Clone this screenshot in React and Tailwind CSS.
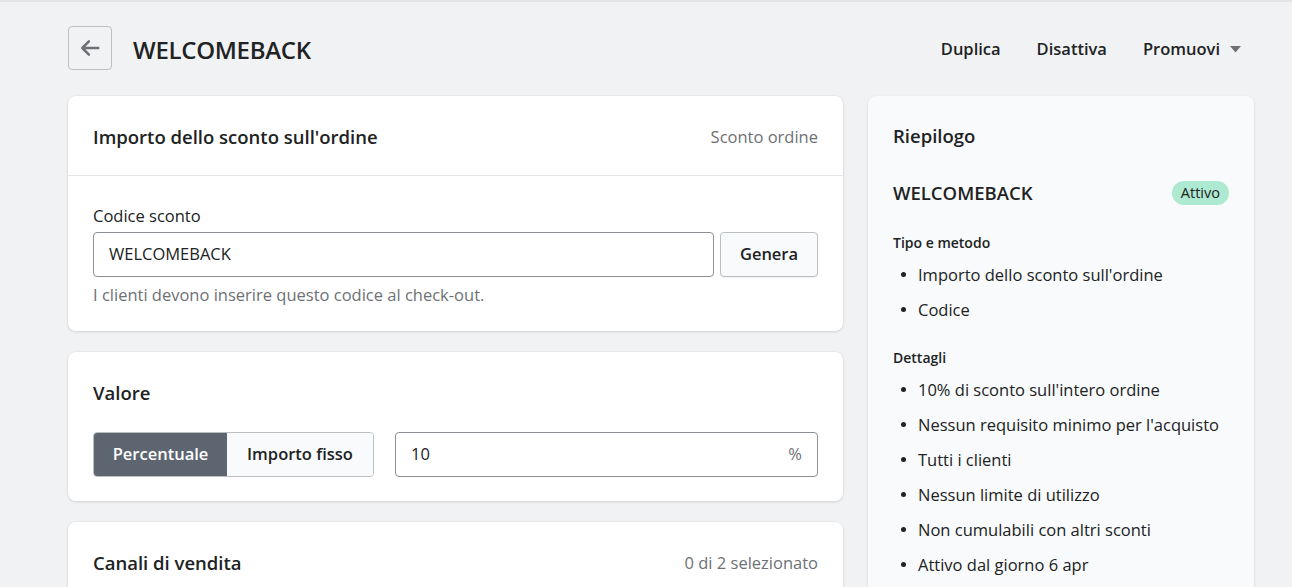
import React from 'react'

const font = { fontFamily: '"Open Sans", "Noto Sans", sans-serif' }

const Card = ({ children, className = '' }) => (
    <div className={`bg-white rounded-lg shadow-[0_1px_3px_rgba(0,0,0,0.12),0_0_0_1px_rgba(0,0,0,0.02)] ${className}`}>
        {children}
    </div>
)

const summaryType = ["Importo dello sconto sull'ordine", 'Codice']
const summaryDetails = [
    "10% di sconto sull'intero ordine",
    "Nessun requisito minimo per l'acquisto",
    'Tutti i clienti',
    'Nessun limite di utilizzo',
    'Non cumulabili con altri sconti',
    'Attivo dal giorno 6 apr',
]

const Bullets = ({ items }) => (
    <ul className="flex flex-col gap-[11px] mt-[10px]">
        {items.map((t) => (
            <li key={t} className="flex items-center text-[16.5px] leading-6 text-[#202223]">
                <span className="w-[5px] h-[5px] rounded-full bg-[#202223] ml-[8px] mr-[12px] shrink-0" />
                {t}
            </li>
        ))}
    </ul>
)

export default function App() {
    return (
        <div style={font} className="w-[1292px] h-[587px] overflow-hidden bg-[#f1f2f4] border-t-2 border-[#e3e4e6] text-[#202223]">
            <div className="w-[1186px] ml-[68px]">
                {/* header */}
                <div className="flex items-center justify-between mt-[24px] h-[44px]">
                    <div className="flex items-center gap-[21px]">
                        <button className="w-[44px] h-[44px] rounded-[4px] border border-[#babfc3] flex items-center justify-center text-[#6d7175]">
                            <svg width="22" height="22" viewBox="0 0 20 20" fill="none" stroke="currentColor" strokeWidth="2.3" strokeLinecap="round" strokeLinejoin="round">
                                <path d="M17.5 10H3M9 4L3 10l6 6" />
                            </svg>
                        </button>
                        <h1 className="text-[24px] font-semibold tracking-[-0.3px] pt-[3px]">WELCOMEBACK</h1>
                    </div>
                    <div className="flex items-center gap-[36px] text-[16.5px] font-semibold mr-[13px] pt-[2px]">
                        <span>Duplica</span>
                        <span>Disattiva</span>
                        <span className="flex items-center gap-[10px]">
                            Promuovi
                            <svg width="11" height="7" viewBox="0 0 11 7"><path d="M0 0h11L5.5 6.5z" fill="#6d7175" /></svg>
                        </span>
                    </div>
                </div>

                <div className="flex gap-[25px] mt-[26px] items-start">
                    {/* left column */}
                    <div className="w-[775px] flex flex-col gap-[21px]">
                        <Card>
                            <div className="flex items-center justify-between px-[25px] h-[80px] pt-[3px] border-b border-[#e1e3e5]">
                                <h2 className="text-[18.5px] font-semibold">Importo dello sconto sull'ordine</h2>
                                <span className="text-[16.5px] text-[#6d7175]">Sconto ordine</span>
                            </div>
                            <div className="px-[25px] pt-[28px] pb-[24px]">
                                <div className="text-[16.5px] leading-6">Codice sconto</div>
                                <div className="flex gap-[6px] mt-[4px]">
                                    <div className="flex-1 h-[45px] rounded-[4px] border border-[#8c9196] bg-white flex items-center px-[15px] text-[16.5px] text-[#202223]">
                                        WELCOMEBACK
                                    </div>
                                    <button className="w-[98px] h-[45px] rounded-[4px] border border-[#babfc3] bg-[#f9fafb] text-[16.5px] font-semibold shadow-[0_1px_0_rgba(0,0,0,0.05)]">
                                        Genera
                                    </button>
                                </div>
                                <div className="text-[16.5px] leading-6 text-[#6d7175] mt-[6px]">I clienti devono inserire questo codice al check-out.</div>
                            </div>
                        </Card>

                        <Card className="px-[25px] pt-[29px] pb-[24px]">
                            <h2 className="text-[18.5px] font-semibold leading-6">Valore</h2>
                            <div className="flex gap-[21px] mt-[27px]">
                                <div className="flex h-[45px] rounded-[4px] overflow-hidden border border-[#babfc3]">
                                    <div className="w-[133px] bg-[#5c6570] text-white text-[16.5px] font-semibold flex items-center justify-center">Percentuale</div>
                                    <div className="w-[146px] bg-[#f9fafb] text-[16.5px] font-semibold flex items-center justify-center">Importo fisso</div>
                                </div>
                                <div className="flex-1 h-[45px] rounded-[4px] border border-[#8c9196] bg-white flex items-center justify-between px-[15px] text-[16.5px]">
                                    <span>10</span>
                                    <span className="text-[#6d7175]">%</span>
                                </div>
                            </div>
                        </Card>

                        <Card className="h-[80px] px-[25px] flex items-center justify-between pt-[2px]">
                            <h2 className="text-[18.5px] font-semibold">Canali di vendita</h2>
                            <span className="text-[16.5px] text-[#6d7175]">0 di 2 selezionato</span>
                        </Card>
                    </div>

                    {/* summary */}
                    <div className="w-[386px] bg-[#f9fafb] rounded-lg shadow-[0_1px_3px_rgba(0,0,0,0.12)] px-[25px] pt-[28px] pb-[30px]">
                        <h2 className="text-[18.5px] font-semibold leading-6">Riepilogo</h2>
                        <div className="flex items-center justify-between mt-[31px]">
                            <span className="text-[18.5px] font-semibold">WELCOMEBACK</span>
                            <span className="bg-[#aee9d1] rounded-full px-[9px] h-[24px] flex items-center text-[14.5px] text-[#202223]">Attivo</span>
                        </div>
                        <div className="text-[14px] font-semibold mt-[25px]">Tipo e metodo</div>
                        <Bullets items={summaryType} />
                        <div className="text-[14px] font-semibold mt-[25px]">Dettagli</div>
                        <Bullets items={summaryDetails} />
                    </div>
                </div>
            </div>
        </div>
    )
}
